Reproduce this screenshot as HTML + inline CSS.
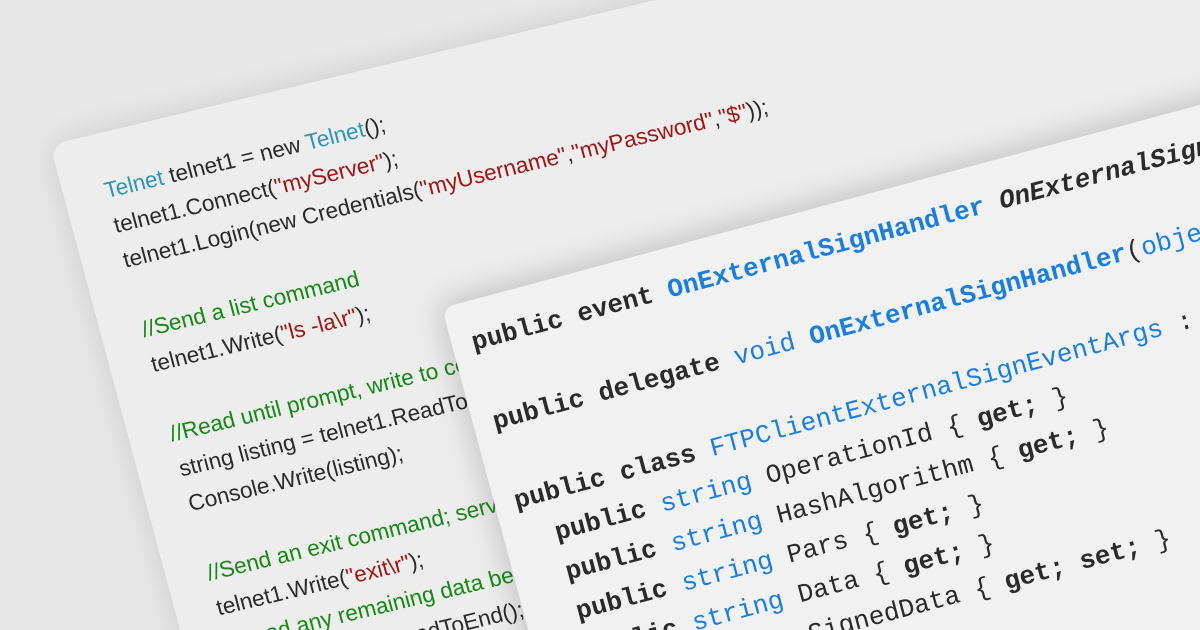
<!DOCTYPE html>
<html><head><meta charset="utf-8"><style>
html,body{margin:0;padding:0;width:1200px;height:630px;overflow:hidden;background:#e7e7e7;}
.wrap{position:relative;width:1200px;height:630px;overflow:hidden;}
.back{position:absolute;left:0;top:0;width:1400px;height:900px;background:#ededed;border-radius:16px;
transform-origin:0 0;transform:matrix(0.973,-0.233,0.259,0.966,50,145);
box-shadow:0 0 30px rgba(0,0,0,0.13);}
.back pre{margin:0;padding:40px 0 0 41px;font-family:"Liberation Sans",sans-serif;font-size:22.5px;line-height:36px;color:#2a2a2a;}
.t{color:#2f95b5}.r{color:#a31515}.g{color:#148a14}
.front{position:absolute;left:0;top:0;width:1200px;height:800px;background:#f1f1f1;border-radius:12px;
transform-origin:0 0;transform:translate(442px,308px) rotate(-15deg);
box-shadow:-4px -6px 30px rgba(0,0,0,0.18);}
.front pre{margin:0;padding:22px 0 0 20px;font-family:"Liberation Mono",monospace;font-size:26px;line-height:41px;color:#2a2a2a;}
.b{font-weight:bold}.bl{color:#1a7ee0}.i{font-style:italic}
</style></head><body><div class="wrap">
<div class="back"><pre><span class="t">Telnet</span> telnet1 = new <span class="t">Telnet</span>();
telnet1.Connect(<span class="r">"myServer"</span>);
telnet1.Login(new Credentials(<span class="r">"myUsername"</span>,<span class="r">"myPassword"</span>,<span class="r">"$"</span>));

<span class="g">//Send a list command</span>
telnet1.Write(<span class="r">"ls -la\r"</span>);

<span class="g">//Read until prompt, write to console</span>
string listing = telnet1.ReadTo(<span class="r">"$"</span>);
Console.Write(listing);

<span class="g">//Send an exit command; server will close</span>
telnet1.Write(<span class="r">"exit\r"</span>);
<span class="g">//Read any remaining data before closing</span>
listing = telnet1.ReadToEnd();
</pre></div>
<div class="front"><pre><span class="b">public event</span> <span class="b bl">OnExternalSignHandler</span> <span class="b i">OnExternalSign</span>;

<span class="b">public delegate</span> <span class="bl">void</span> <span class="b bl">OnExternalSignHandler</span>(<span class="bl">object</span> sender);

<span class="b">public class</span> <span class="bl">FTPClientExternalSignEventArgs</span> :
  <span class="b">public</span> <span class="bl">string</span> OperationId { <span class="b">get;</span> }
  <span class="b">public</span> <span class="bl">string</span> HashAlgorithm { <span class="b">get;</span> }
  <span class="b">public</span> <span class="bl">string</span> Pars { <span class="b">get;</span> }
  <span class="b">public</span> <span class="bl">string</span> Data { <span class="b">get;</span> }
  <span class="b">public</span> <span class="bl">string</span> SignedData { <span class="b">get; set;</span> }
</pre></div>
</div></body></html>
